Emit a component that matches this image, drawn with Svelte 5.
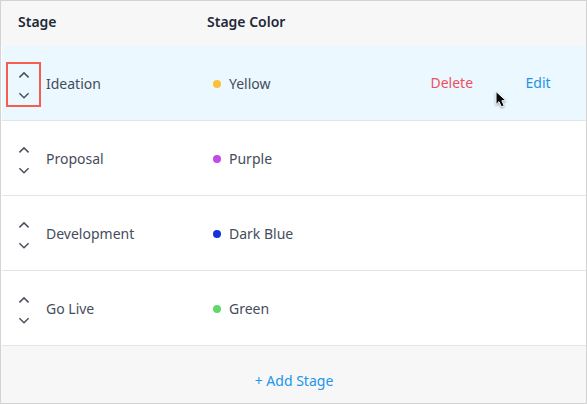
<script>
  const stages = [
    { name: 'Ideation', color: 'Yellow', hex: '#fdbf37', active: true },
    { name: 'Proposal', color: 'Purple', hex: '#c44ae8' },
    { name: 'Development', color: 'Dark Blue', hex: '#1233dc' },
    { name: 'Go Live', color: 'Green', hex: '#62d868' }
  ];
</script>

<div class="panel">
  <div class="head">
    <span class="col-stage">Stage</span>
    <span>Stage Color</span>
  </div>

  {#each stages as stage}
    <div class="row" class:active={stage.active}>
      <div class="sorter">
        <svg width="12" height="8" viewBox="0 0 12 8"><path d="M1.4 6.4 6 1.9l4.6 4.5" /></svg>
        <svg width="12" height="8" viewBox="0 0 12 8"><path d="M1.4 1.3 6 5.8l4.6-4.5" /></svg>
      </div>
      <span class="name">{stage.name}</span>
      <span class="dot" style="background: {stage.hex}"></span>
      <span class="color">{stage.color}</span>
      {#if stage.active}
        <span class="delete">Delete</span>
        <span class="edit">Edit</span>
      {/if}
    </div>
  {/each}

  <div class="foot">+ Add Stage</div>

  <svg class="cursor" width="16" height="20" viewBox="0 0 16 20">
    <path d="M2 1.5v13l3-2.8 2.4 5.2 2.8-1.3-2.3-4.9h4.2z" />
  </svg>
</div>

<style>
  .panel {
    position: relative;
    box-sizing: border-box;
    width: 587px;
    height: 404px;
    display: flex;
    flex-direction: column;
    border: 1px solid #d3d3d3;
    background: #fff;
    font: 14px/20px 'Noto Sans', sans-serif;
    color: #454c5b;
    white-space: nowrap;
    overflow: hidden;
  }
  .head {
    height: 45px;
    box-sizing: border-box;
    display: flex;
    padding: 11px 0 0 17px;
    background: #f7f7f7;
    color: #1f2937;
    font-weight: 600;
  }
  .col-stage {
    width: 189px;
  }
  .row {
    box-sizing: border-box;
    height: 75px;
    margin-left: 1px;
    padding-left: 4px;
    display: flex;
    align-items: center;
    border-bottom: 1px solid #e3e4e5;
  }
  .row.active {
    background: #ebf8ff;
  }
  .sorter {
    box-sizing: border-box;
    width: 35px;
    height: 45px;
    margin-top: 3px;
    padding: 7px 0 5px;
    border: 2px solid transparent;
    display: flex;
    flex-direction: column;
    align-items: center;
    justify-content: space-between;
  }
  .active .sorter {
    border-color: #f85c4f;
  }
  .sorter svg {
    display: block;
    fill: none;
    stroke: #4a5160;
    stroke-width: 1.5;
  }
  .name {
    width: 167px;
    margin: 2px 0 0 5px;
  }
  .dot {
    width: 8px;
    height: 8px;
    border-radius: 50%;
    margin-top: 2px;
  }
  .color {
    width: 201.5px;
    margin: 2px 0 0 8px;
  }
  .delete {
    width: 95px;
    color: #f04f5f;
  }
  .edit {
    color: #1f93e8;
  }
  .foot {
    flex: 1;
    box-sizing: border-box;
    padding: 25px 0 0 1px;
    background: #f7f7f7;
    color: #2096ec;
    text-align: center;
  }
  .cursor {
    position: absolute;
    left: 493px;
    top: 89px;
    fill: #080808;
    stroke: #fff;
    stroke-width: 1;
    filter: drop-shadow(0 1px 1px rgba(0, 0, 0, 0.35));
  }
</style>
